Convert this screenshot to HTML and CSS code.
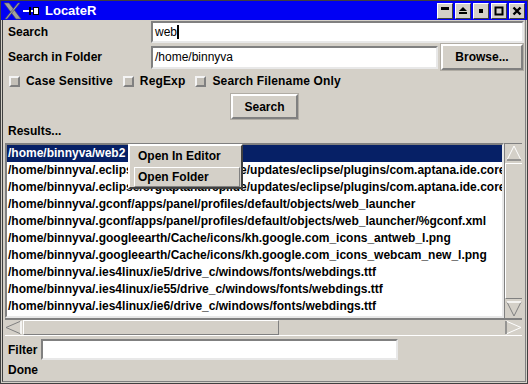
FILE: index.html
```html
<!DOCTYPE html>
<html lang="en">
<head>
    <meta charset="UTF-8">
    <title>LocateR</title>
    <link rel="stylesheet" href="styles.css">
</head>
<body>

    <div class="window">

        <!-- Title bar -->
        <div class="titlebar">
            <svg class="x-logo" width="19" height="18" viewBox="0 0 19 18">
                <polygon points="1,1 6,1 18,17 13,17" fill="#a0a0a0" stroke="#505050" stroke-width="0.6"/>
                <polygon points="15,1 17,1 4,17 2,17" fill="#a0a0a0" stroke="#505050" stroke-width="0.6"/>
            </svg>
            <svg class="pin" width="16" height="10" viewBox="0 0 16 10">
                <rect x="0" y="4" width="6" height="2" fill="#fff"/>
                <rect x="6" y="1" width="2" height="8" fill="#000"/>
                <rect x="8" y="4" width="2" height="2" fill="#fff"/>
                <rect x="10.5" y="1.5" width="5" height="7" fill="#fff" stroke="#000" stroke-width="1"/>
            </svg>
            <span class="title">LocateR</span>
            <div class="title-buttons">
                <span class="tbtn"><svg width="10" height="10" viewBox="0 0 10 10"><rect x="1" y="1" width="8" height="3" fill="#000"/></svg></span>
                <span class="tbtn"><svg width="10" height="10" viewBox="0 0 10 10"><polygon points="5,1 9,5 1,5" fill="#000"/><rect x="1" y="6" width="8" height="2" fill="#000"/></svg></span>
                <span class="tbtn"><svg width="10" height="10" viewBox="0 0 10 10"><rect x="3" y="3" width="4" height="4" fill="#000"/></svg></span>
                <span class="tbtn"><svg width="10" height="10" viewBox="0 0 10 10"><rect x="1.5" y="1.5" width="7" height="7" fill="none" stroke="#000" stroke-width="2"/></svg></span>
                <span class="tbtn"><svg width="10" height="10" viewBox="0 0 10 10"><path d="M1.5 1.5 L8.5 8.5 M8.5 1.5 L1.5 8.5" stroke="#000" stroke-width="2.4"/></svg></span>
            </div>
        </div>

        <!-- Main content -->
        <div class="content">
            <div class="form-row search-row">
                <label>Search</label>
                <div class="field">web<span class="caret"></span></div>
            </div>
            <div class="form-row folder-row">
                <label>Search in Folder</label>
                <div class="field">/home/binnyva</div>
                <button class="btn browse-btn">Browse...</button>
            </div>

            <div class="options">
                <span class="check"></span><span class="opt">Case Sensitive</span>
                <span class="check"></span><span class="opt">RegExp</span>
                <span class="check"></span><span class="opt">Search Filename Only</span>
            </div>

            <div class="actions">
                <button class="btn search-btn">Search</button>
            </div>

            <div class="results-label">Results...</div>

            <div class="results">
                <div class="list" id="list"></div>
                <div class="vscroll">
                    <svg class="arrow" width="18" height="18" viewBox="0 0 18 18">
                        <polyline points="2,16 9,2 16,16" fill="none" stroke="#fff" stroke-width="1"/>
                        <line x1="2" y1="16" x2="16" y2="16" stroke="#808080" stroke-width="1.5"/>
                    </svg>
                    <div class="vthumb"></div>
                    <svg class="arrow" width="18" height="18" viewBox="0 0 18 18">
                        <polyline points="2,2 9,16 16,2" fill="none" stroke="#808080" stroke-width="1"/>
                        <line x1="2" y1="2" x2="16" y2="2" stroke="#fff" stroke-width="1.5"/>
                    </svg>
                </div>
                <div class="hscroll">
                    <svg class="arrow" width="17" height="15" viewBox="0 0 17 15">
                        <polyline points="16,1 1,7.5 16,14" fill="none" stroke="#808080" stroke-width="1"/>
                        <line x1="16" y1="1" x2="16" y2="14" stroke="#fff" stroke-width="1.5"/>
                    </svg>
                    <div class="hthumb"></div>
                    <div class="htrough"></div>
                    <svg class="arrow" width="17" height="15" viewBox="0 0 17 15">
                        <polyline points="1,1 16,7.5 1,14" fill="none" stroke="#fff" stroke-width="1"/>
                        <line x1="1" y1="1" x2="1" y2="14" stroke="#808080" stroke-width="1.5"/>
                    </svg>
                </div>
            </div>

            <div class="filter-row">
                <label>Filter</label>
                <div class="field filter-field"></div>
            </div>

            <div class="status">Done</div>
        </div>

        <!-- Context menu -->
        <div class="menu">
            <div class="menu-item">Open In Editor</div>
            <div class="menu-item active">Open Folder</div>
        </div>
    </div>

    <script>
        const results = [
            '/home/binnyva/web2',
            '/home/binnyva/.eclipse/org.aptana.rcp.ide/updates/eclipse/plugins/com.aptana.ide.core_1.0',
            '/home/binnyva/.eclipse/org.aptana.rcp.ide/updates/eclipse/plugins/com.aptana.ide.core_1.0',
            '/home/binnyva/.gconf/apps/panel/profiles/default/objects/web_launcher',
            '/home/binnyva/.gconf/apps/panel/profiles/default/objects/web_launcher/%gconf.xml',
            '/home/binnyva/.googleearth/Cache/icons/kh.google.com_icons_antweb_l.png',
            '/home/binnyva/.googleearth/Cache/icons/kh.google.com_icons_webcam_new_l.png',
            '/home/binnyva/.ies4linux/ie5/drive_c/windows/fonts/webdings.ttf',
            '/home/binnyva/.ies4linux/ie55/drive_c/windows/fonts/webdings.ttf',
            '/home/binnyva/.ies4linux/ie6/drive_c/windows/fonts/webdings.ttf'
        ];

        // Fill the results list
        const list = document.getElementById('list');
        results.forEach((path, i) => {
            const row = document.createElement('div');
            row.classList.add('row');
            if (i === 0) row.classList.add('selected');
            row.textContent = path;
            list.appendChild(row);
        });
    </script>

</body>
</html>
```

FILE: styles.css
```css
/* Basic Reset */
* {
    margin: 0;
    padding: 0;
    box-sizing: border-box;
}

body {
    font-family: "Liberation Sans", Arial, sans-serif;
    font-size: 12px;
    font-weight: bold;
    color: #000;
    background: #d4d0c8;
}

/* Window frame */
.window {
    position: relative;
    width: 528px;
    height: 384px;
    border: 1px solid #404040;
    background: #d4d0c8;
    display: flex;
    flex-direction: column;
}

/* Title bar */
.titlebar {
    height: 19px;
    background: #0000f4;
    display: flex;
    align-items: center;
    padding-left: 2px;
    flex-shrink: 0;
}

.x-logo {
    margin-top: 1px;
}

.pin {
    margin-left: 1px;
}

.title {
    color: #fff;
    font-size: 13px;
    margin-left: 6px;
}

.title-buttons {
    margin-left: auto;
    display: flex;
    gap: 2px;
    margin-right: 2px;
}

.tbtn {
    width: 16px;
    height: 16px;
    background: #d4d0c8;
    border: 1px solid;
    border-color: #fff #404040 #404040 #fff;
    display: flex;
    align-items: center;
    justify-content: center;
}

/* Content area */
.content {
    flex: 1;
    margin: 0 1px 1px 1px;
    border-left: 1px solid #404040;
    border-right: 1px solid #808080;
    border-bottom: 1px solid #808080;
    padding: 1px 1px 0 5px;
    display: flex;
    flex-direction: column;
}

.form-row {
    display: flex;
    align-items: center;
}

.form-row label {
    width: 143px;
    flex-shrink: 0;
}

.field {
    background: #fff;
    border: 2px solid;
    border-color: #808080 #e8e8e8 #e8e8e8 #808080;
    font-weight: normal;
    font-size: 12px;
    padding: 1px 2px;
    display: flex;
    align-items: center;
}

.search-row {
    height: 22px;
}

.search-row .field {
    flex: 1;
    height: 22px;
}

.caret {
    display: inline-block;
    width: 2px;
    height: 14px;
    background: #000;
}

.folder-row {
    height: 26px;
    margin-top: 1px;
}

.folder-row .field {
    width: 287px;
    height: 23px;
}

.btn {
    font-family: inherit;
    font-weight: bold;
    font-size: 12px;
    background: #d4d0c8;
    border: 2px solid;
    border-color: #fff #808080 #808080 #fff;
    outline: 1px solid #b0aca4;
    color: #000;
}

.browse-btn {
    width: 82px;
    height: 26px;
    margin-left: 3px;
}

/* Options */
.options {
    height: 18px;
    margin-top: 2px;
    display: flex;
    align-items: center;
    padding-left: 1px;
}

.check {
    width: 11px;
    height: 11px;
    border: 2px solid;
    border-color: #f4f4f4 #808080 #808080 #f4f4f4;
    background: #c4c0b8;
    margin-right: 6px;
}

.opt {
    margin-right: 10px;
    letter-spacing: 0.15px;
}

.actions {
    margin-top: 4px;
    display: flex;
    padding-left: 223px;
}

.search-btn {
    width: 67px;
    height: 25px;
}

.results-label {
    margin-top: 5px;
    height: 14px;
    line-height: 14px;
}

/* Results list */
.results {
    margin-top: 5px;
    margin-left: -3px;
    display: grid;
    grid-template-columns: 499px 18px;
    grid-template-rows: 175px 18px;
}

.list {
    background: #fff;
    border: 2px solid;
    border-color: #808080 #e8e8e8 #e8e8e8 #808080;
    overflow: hidden;
    font-size: 12px;
}

.row {
    height: 17px;
    line-height: 16px;
    padding-left: 1px;
    white-space: nowrap;
}

.row.selected {
    background: #062066;
    color: #fff;
}

.vscroll {
    display: flex;
    flex-direction: column;
    border-left: 1px solid #808080;
    border-top: 1px solid #808080;
}

.vthumb {
    flex: 1;
    border-top: 1px solid #fff;
    border-left: 1px solid #fff;
    border-bottom: 1px solid #808080;
    margin: 1px 0;
}

.hscroll {
    grid-column: 1 / 3;
    display: flex;
    align-items: center;
    border-top: 2px solid #808080;
    border-bottom: 1px solid #fff;
}

.hthumb {
    width: 256px;
    height: 15px;
    border: 1px solid;
    border-color: #fff #808080 #808080 #fff;
    margin-left: 1px;
}

.htrough {
    flex: 1;
}

/* Filter and status */
.filter-row {
    margin-top: 3px;
    height: 21px;
    display: flex;
    align-items: center;
}

.filter-row label {
    width: 33px;
}

.filter-field {
    width: 357px;
    height: 21px;
}

.status {
    margin-top: 3px;
    height: 14px;
    line-height: 14px;
}

/* Context menu */
.menu {
    position: absolute;
    left: 127px;
    top: 143px;
    width: 115px;
    height: 45px;
    background: #d4d0c8;
    border: 2px solid;
    border-color: #fff #404040 #404040 #fff;
    padding: 0 1px;
}

.menu-item {
    height: 20px;
    line-height: 18px;
    padding-left: 6px;
    border: 1px solid transparent;
}

.menu-item.active {
    margin-top: 1px;
    padding-left: 3px;
    margin-left: 3px;
    border-color: #fff #808080 #808080 #fff;
}
```
